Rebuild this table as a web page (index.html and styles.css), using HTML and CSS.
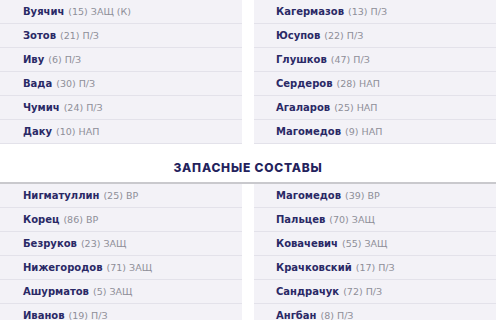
FILE: index.html
```html
<!DOCTYPE html>
<html>
<head>
<meta charset="utf-8">
<link rel="stylesheet" href="styles.css">
</head>
<body>
<div class="page">
  <div class="grid">
    <div class="cell"><b>Вуячич</b> <span>(15) ЗАЩ (К)</span></div>
    <div class="cell"><b>Кагермазов</b> <span>(13) П/З</span></div>
    <div class="cell"><b>Зотов</b> <span>(21) П/З</span></div>
    <div class="cell"><b>Юсупов</b> <span>(22) П/З</span></div>
    <div class="cell"><b>Иву</b> <span>(6) П/З</span></div>
    <div class="cell"><b>Глушков</b> <span>(47) П/З</span></div>
    <div class="cell"><b>Вада</b> <span>(30) П/З</span></div>
    <div class="cell"><b>Сердеров</b> <span>(28) НАП</span></div>
    <div class="cell"><b>Чумич</b> <span>(24) П/З</span></div>
    <div class="cell"><b>Агаларов</b> <span>(25) НАП</span></div>
    <div class="cell"><b>Даку</b> <span>(10) НАП</span></div>
    <div class="cell"><b>Магомедов</b> <span>(9) НАП</span></div>
  </div>
  <h2 class="title">ЗАПАСНЫЕ СОСТАВЫ</h2>
  <div class="grid subs">
    <div class="cell"><b>Нигматуллин</b> <span>(25) ВР</span></div>
    <div class="cell"><b>Магомедов</b> <span>(39) ВР</span></div>
    <div class="cell"><b>Корец</b> <span>(86) ВР</span></div>
    <div class="cell"><b>Пальцев</b> <span>(70) ЗАЩ</span></div>
    <div class="cell"><b>Безруков</b> <span>(23) ЗАЩ</span></div>
    <div class="cell"><b>Ковачевич</b> <span>(55) ЗАЩ</span></div>
    <div class="cell"><b>Нижегородов</b> <span>(71) ЗАЩ</span></div>
    <div class="cell"><b>Крачковский</b> <span>(17) П/З</span></div>
    <div class="cell"><b>Ашурматов</b> <span>(5) ЗАЩ</span></div>
    <div class="cell"><b>Сандрачук</b> <span>(72) П/З</span></div>
    <div class="cell"><b>Иванов</b> <span>(19) П/З</span></div>
    <div class="cell"><b>Ангбан</b> <span>(8) П/З</span></div>
  </div>
</div>
</body>
</html>
```

FILE: styles.css
```css
html, body {
  margin: 0;
  padding: 0;
  background: #ffffff;
}
body {
  font-family: "DejaVu Sans", "Inter", sans-serif;
  width: 500px;
  height: 320px;
  overflow: hidden;
}
.page {
  width: 496px;
}
.grid {
  display: grid;
  grid-template-columns: 242px 242px;
  column-gap: 12px;
}
.cell {
  height: 23px;
  border-bottom: 1px solid #e3e2ea;
  background: #f3f2f7;
  display: flex;
  align-items: center;
  padding-left: 23px;
  white-space: nowrap;
}
.cell:nth-child(even) {
  padding-left: 22px;
}
.cell b {
  font-size: 10px;
  font-weight: 700;
  color: #2a2966;
  margin-right: 4px;
}
.cell span {
  font-size: 9.5px;
  font-weight: 400;
  color: #8e8e98;
}
.title {
  margin: 0;
  height: 30px;
  padding-top: 8px;
  display: flex;
  align-items: center;
  justify-content: center;
  font-family: "Inter", "DejaVu Sans", sans-serif;
  font-size: 12px;
  font-weight: 800;
  color: #23225c;
  letter-spacing: 0.8px;
}
.subs {
  border-top: 2px solid #c9c9cd;
}
```
